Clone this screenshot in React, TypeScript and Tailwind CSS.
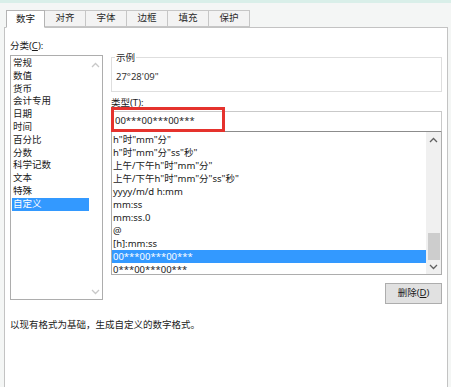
import React from "react";

const categories = [
  "常规",
  "数值",
  "货币",
  "会计专用",
  "日期",
  "时间",
  "百分比",
  "分数",
  "科学记数",
  "文本",
  "特殊",
  "自定义",
];

const formats = [
  'h"时"mm"分"',
  'h"时"mm"分"ss"秒"',
  '上午/下午h"时"mm"分"',
  '上午/下午h"时"mm"分"ss"秒"',
  "yyyy/m/d h:mm",
  "mm:ss",
  "mm:ss.0",
  "@",
  "[h]:mm:ss",
  "00***00***00***",
  "0***00***00***",
];

const tabs = ["数字", "对齐", "字体", "边框", "填充", "保护"];

function Chevron({ up, color }: { up?: boolean; color: string }) {
  return (
    <svg width="9" height="6" viewBox="0 0 9 6">
      <polyline
        points={up ? "1,5 4.5,1.5 8,5" : "1,1 4.5,4.5 8,1"}
        fill="none"
        stroke={color}
        strokeWidth="1.3"
      />
    </svg>
  );
}

export default function App() {
  return (
    <div className="w-[451px] h-[387px] overflow-hidden bg-[#eef5f3] font-['Noto_Sans','Noto_Sans_CJK_SC',sans-serif] text-[9.5px] text-[#1a1a1a] flex flex-col">
      <div className="h-[3px] bg-[#d9efe9]" />
      <div className="flex-1 flex flex-col pl-[4px] pr-[3px] bg-[#f4f6f5]">
        {/* tabs */}
        <div className="flex h-[24px] items-end pl-[2px]">
          {tabs.map((t, i) => (
            <div
              key={t}
              className={
                i === 0
                  ? "w-[39px] h-[18px] -mb-px z-10 bg-white border border-[#b4b4b4] border-b-white flex items-center justify-center"
                  : "w-[41px] h-[17px] bg-[#f3f3f3] border border-l-0 border-[#c6c6c6] flex items-center justify-center text-[#2a2a2a]"
              }
            >
              {t}
            </div>
          ))}
        </div>
        {/* panel */}
        <div className="flex-1 bg-white border border-b-0 border-[#c3c3c3] flex flex-col px-[5px] pt-[10px]">
          <div className="flex gap-[8px]">
            {/* left column */}
            <div className="w-[93px] flex flex-col">
              <div className="h-[16px] leading-[16px]">
                分类(<span className="underline">C</span>):
              </div>
              <div className="mt-[1px] h-[245px] border border-[#adadad] flex">
                <div className="flex-1 flex flex-col pl-[1px] pt-[1px]">
                  {categories.map((c, i) => (
                    <div
                      key={c}
                      className={
                        i === categories.length - 1
                          ? "h-[12.8px] leading-[12.8px] pl-[1px] bg-[#3399ff] text-white"
                          : "h-[12.8px] leading-[12.8px] pl-[1px]"
                      }
                    >
                      {c}
                    </div>
                  ))}
                </div>
                <div className="w-[13px] flex flex-col items-center justify-between pt-[6px] pb-[4px]">
                  <Chevron up color="#c8c8c8" />
                  <Chevron color="#c8c8c8" />
                </div>
              </div>
            </div>
            {/* right column */}
            <div className="flex-1 flex flex-col pt-[13px]">
              <fieldset className="h-[41px] border border-[#dedede] px-[3px]">
                <legend className="px-[1px] leading-[13px] text-[#2a2a2a]">示例</legend>
                <div className="pt-[6px] pl-[1px] leading-[13px] text-[#333]">27°28'09"</div>
              </fieldset>
              <div className="mt-[2px] h-[17px] leading-[17px]">
                类型(<span className="underline">T</span>):
              </div>
              <div className="relative h-[21px] border border-[#c9c9c9] border-b-[#8c8c8c] flex items-center pl-[3px]">
                00***00***00***
                <div className="absolute left-[-1px] top-[-5px] w-[114px] h-[25px] border-[3px] border-[#e5322d]" />
              </div>
              <div className="h-[143px] border border-t-0 border-[#adadad] flex">
                <div className="flex-1 flex flex-col pt-[1px]">
                  {formats.map((f, i) => (
                    <div
                      key={f}
                      className={
                        i === 9
                          ? "h-[13px] leading-[13px] pl-[1px] bg-[#3399ff] text-white"
                          : "h-[13px] leading-[13px] pl-[1px]"
                      }
                    >
                      {f}
                    </div>
                  ))}
                </div>
                <div className="w-[15px] bg-[#f0f0f0] flex flex-col items-center">
                  <div className="h-[16px] flex items-center">
                    <Chevron up color="#606060" />
                  </div>
                  <div className="flex-1" />
                  <div className="w-[12px] h-[27px] bg-[#cdcdcd]" />
                  <div className="h-[14px] flex items-center">
                    <Chevron color="#606060" />
                  </div>
                </div>
              </div>
              <div className="flex justify-end mt-[8px] pr-[0px]">
                <div className="w-[57px] h-[21px] bg-[#e1e1e1] border border-[#adadad] flex items-center justify-center">
                  删除(<span className="underline">D</span>)
                </div>
              </div>
            </div>
          </div>
          <div className="mt-[14px] leading-[14px]">以现有格式为基础，生成自定义的数字格式。</div>
        </div>
      </div>
    </div>
  );
}
